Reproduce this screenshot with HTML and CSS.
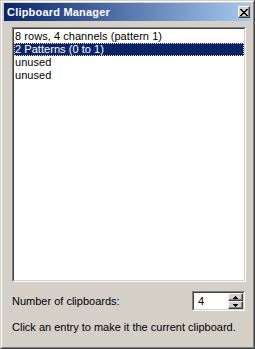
FILE: index.html
```html
<!DOCTYPE html>
<html>
<head>
<meta charset="utf-8">
<link rel="stylesheet" href="styles.css">
</head>
<body>
<div class="window">
  <div class="frame">
    <div class="titlebar">
      <span class="title">Clipboard Manager</span>
      <div class="close-btn">
        <svg width="8" height="7" viewBox="0 0 8 7">
          <path d="M0 0h2v1h-2zM6 0h2v1h-2zM1 1h2v1h-2zM5 1h2v1h-2zM2 2h4v1h-4zM3 3h2v1h-2zM2 4h4v1h-4zM1 5h2v1h-2zM5 5h2v1h-2zM0 6h2v1h-2zM6 6h2v1h-2z" fill="#000"/>
        </svg>
      </div>
    </div>
    <div class="client">
      <div class="listbox">
        <div class="listbox-inner">
          <div class="item">8 rows, 4 channels (pattern 1)</div>
          <div class="item selected">2 Patterns (0 to 1)</div>
          <div class="item">unused</div>
          <div class="item">unused</div>
        </div>
      </div>
      <div class="count-row">
        <span class="label">Number of clipboards:</span>
        <div class="spin">
          <div class="spin-inner">
            <span class="spin-value">4</span>
            <div class="spin-buttons">
              <div class="spin-btn">
                <svg width="5" height="3" viewBox="0 0 5 3"><path d="M2 0h1v1h1v1h1v1h-5v-1h1v-1h1z" fill="#000"/></svg>
              </div>
              <div class="spin-btn">
                <svg width="5" height="3" viewBox="0 0 5 3"><path d="M0 0h5v1h-1v1h-1v1h-1v-1h-1v-1h-1z" fill="#000"/></svg>
              </div>
            </div>
          </div>
        </div>
      </div>
      <div class="hint">Click an entry to make it the current clipboard.</div>
    </div>
  </div>
</div>
</body>
</html>
```

FILE: styles.css
```css
html, body {
  margin: 0;
  padding: 0;
  background: #d4d0c8;
}

body {
  font-family: "Liberation Sans", Arial, sans-serif;
  font-size: 11px;
  color: #000;
}

.window {
  width: 255px;
  height: 349px;
  box-sizing: border-box;
  border-style: solid;
  border-width: 1px;
  border-color: #d4d0c8 #404040 #404040 #d4d0c8;
}

.frame {
  height: 100%;
  box-sizing: border-box;
  border-style: solid;
  border-width: 1px;
  border-color: #ffffff #808080 #808080 #ffffff;
  padding: 1px 2px 2px 2px;
  display: flex;
  flex-direction: column;
  background: #d4d0c8;
}

.titlebar {
  height: 18px;
  flex: none;
  background: linear-gradient(to right, #0a246a, #a6caf0);
  display: flex;
  align-items: center;
  justify-content: space-between;
  padding: 0 1px 0 3px;
}

.title {
  color: #fff;
  font-weight: bold;
  font-size: 11px;
  line-height: 13px;
  letter-spacing: 0.2px;
}

.close-btn {
  width: 12px;
  height: 12px;
  box-sizing: border-box;
  background: #d4d0c8;
  border-style: solid;
  border-width: 1px;
  border-color: #ffffff #404040 #404040 #ffffff;
  box-shadow: inset -1px -1px 0 #808080;
  display: flex;
  align-items: center;
  justify-content: center;
}

.close-btn svg {
  display: block;
}

.client {
  flex: 1;
  display: flex;
  flex-direction: column;
  padding: 6px 5px 0 8px;
}

.listbox {
  height: 255px;
  box-sizing: border-box;
  border-style: solid;
  border-width: 1px;
  border-color: #808080 #ffffff #ffffff #808080;
}

.listbox-inner {
  height: 100%;
  box-sizing: border-box;
  border-style: solid;
  border-width: 1px;
  border-color: #404040 #d4d0c8 #d4d0c8 #404040;
  background: #fff;
  padding-top: 1px;
}

.item {
  height: 13px;
  line-height: 13px;
  padding-left: 1px;
  white-space: nowrap;
  box-sizing: border-box;
  letter-spacing: 0.05px;
}

.item.selected {
  background: #0a246a;
  color: #fff;
  outline: 1px dotted #f0d890;
  outline-offset: -1px;
}

.count-row {
  display: flex;
  align-items: center;
  justify-content: space-between;
  margin-top: 9px;
  padding-right: 1px;
}

.label {
  line-height: 13px;
}

.spin {
  width: 53px;
  height: 20px;
  box-sizing: border-box;
  border-style: solid;
  border-width: 1px;
  border-color: #808080 #ffffff #ffffff #808080;
}

.spin-inner {
  height: 100%;
  box-sizing: border-box;
  border-style: solid;
  border-width: 1px;
  border-color: #404040 #d4d0c8 #d4d0c8 #404040;
  background: #fff;
  display: flex;
  align-items: center;
  justify-content: space-between;
}

.spin-value {
  padding-left: 4px;
  line-height: 13px;
}

.spin-buttons {
  width: 15px;
  height: 16px;
  display: flex;
  flex-direction: column;
}

.spin-btn {
  height: 8px;
  box-sizing: border-box;
  background: #d4d0c8;
  border-style: solid;
  border-width: 1px;
  border-color: #ffffff #404040 #404040 #ffffff;
  box-shadow: inset -1px -1px 0 #808080;
  display: flex;
  align-items: center;
  justify-content: center;
}

.spin-btn svg {
  display: block;
}

.hint {
  margin-top: 10px;
  line-height: 13px;
  white-space: nowrap;
}
```
